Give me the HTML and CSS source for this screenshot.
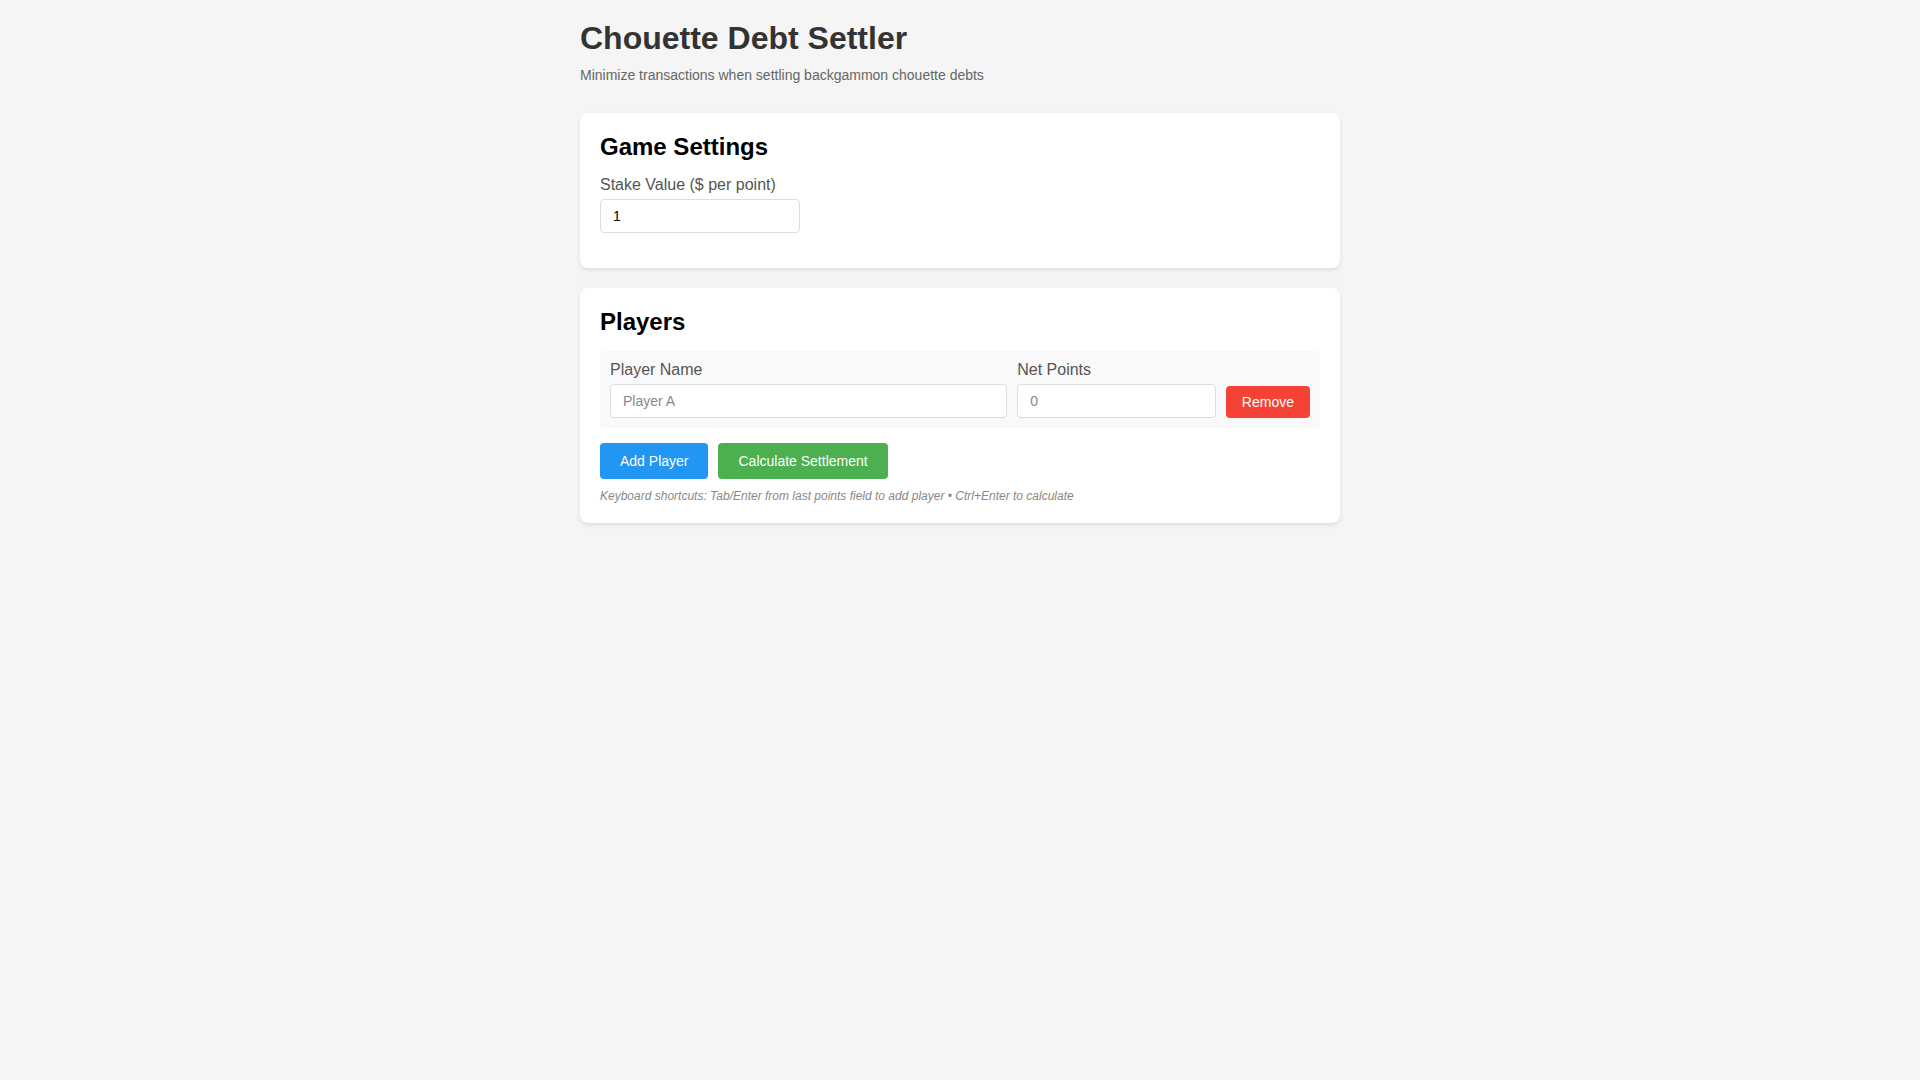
FILE: index.html
```html
<!DOCTYPE html>
<html lang="en">
<head>
<meta charset="utf-8">
<title>Chouette Debt Settler</title>
<link rel="stylesheet" href="styles.css">
</head>
<body>
<div class="container">
  <header class="header">
    <h1 class="title">Chouette Debt Settler</h1>
    <p class="subtitle">Minimize transactions when settling backgammon chouette debts</p>
  </header>

  <section class="card">
    <h2 class="card-title">Game Settings</h2>
    <div class="form-group">
      <label class="label" for="stake">Stake Value ($ per point)</label>
      <input class="input stake-input" id="stake" type="text" value="1">
    </div>
  </section>

  <section class="card">
    <h2 class="card-title">Players</h2>
    <div class="player-row">
      <div class="field field-name">
        <label class="label">Player Name</label>
        <input class="input" type="text" placeholder="Player A">
      </div>
      <div class="field field-points">
        <label class="label">Net Points</label>
        <input class="input" type="text" placeholder="0">
      </div>
      <button class="btn btn-red">Remove</button>
    </div>
    <div class="actions">
      <button class="btn btn-blue btn-lg">Add Player</button>
      <button class="btn btn-green btn-lg">Calculate Settlement</button>
    </div>
    <p class="hint">Keyboard shortcuts: Tab/Enter from last points field to add player • Ctrl+Enter to calculate</p>
  </section>
</div>
</body>
</html>
```

FILE: styles.css
```css
* { box-sizing: border-box; }

body {
  margin: 0;
  padding: 20px;
  background: #f5f5f5;
  font-family: "Liberation Sans", Arial, sans-serif;
  color: #333;
}

.container {
  max-width: 760px;
  margin: 0 auto;
}

.title {
  margin: 0 0 10px;
  font-size: 32px;
  font-weight: bold;
  color: #333;
}

.subtitle {
  margin: 0 0 30px;
  font-size: 14px;
  color: #666;
}

.card {
  background: #fff;
  border-radius: 8px;
  padding: 20px;
  margin-bottom: 20px;
  box-shadow: 0 2px 4px rgba(0, 0, 0, 0.1);
}

.card-title {
  margin: 0 0 15px;
  font-size: 24px;
  font-weight: bold;
  color: #000;
}

.form-group {
  margin-bottom: 15px;
}

.label {
  display: block;
  margin-bottom: 5px;
  font-size: 16px;
  color: #555;
}

.input {
  display: block;
  width: 100%;
  padding: 8px 12px;
  font-family: "Liberation Sans", Arial, sans-serif;
  font-size: 14px;
  border: 1px solid #ddd;
  border-radius: 4px;
  background: #fff;
  color: #000;
}

.input::placeholder { color: #888; }

.stake-input { width: 200px; }

.player-row {
  display: flex;
  align-items: flex-end;
  gap: 10px;
  padding: 10px;
  background: #f9f9f9;
  border-radius: 4px;
  margin-bottom: 15px;
}

.field-name { flex: 2; }
.field-points { flex: 1; }

.btn {
  border: none;
  border-radius: 4px;
  font-family: "Liberation Sans", Arial, sans-serif;
  font-size: 14px;
  color: #fff;
  padding: 8px 16px;
  line-height: normal;
  cursor: pointer;
}

.btn-lg { padding: 10px 20px; }

.btn-red { background: #f44336; }
.btn-blue { background: #2196f3; }
.btn-green { background: #4caf50; }

.actions {
  display: flex;
  gap: 10px;
}

.hint {
  margin: 10px 0 0;
  font-size: 12px;
  font-style: italic;
  color: #888;
}
```
